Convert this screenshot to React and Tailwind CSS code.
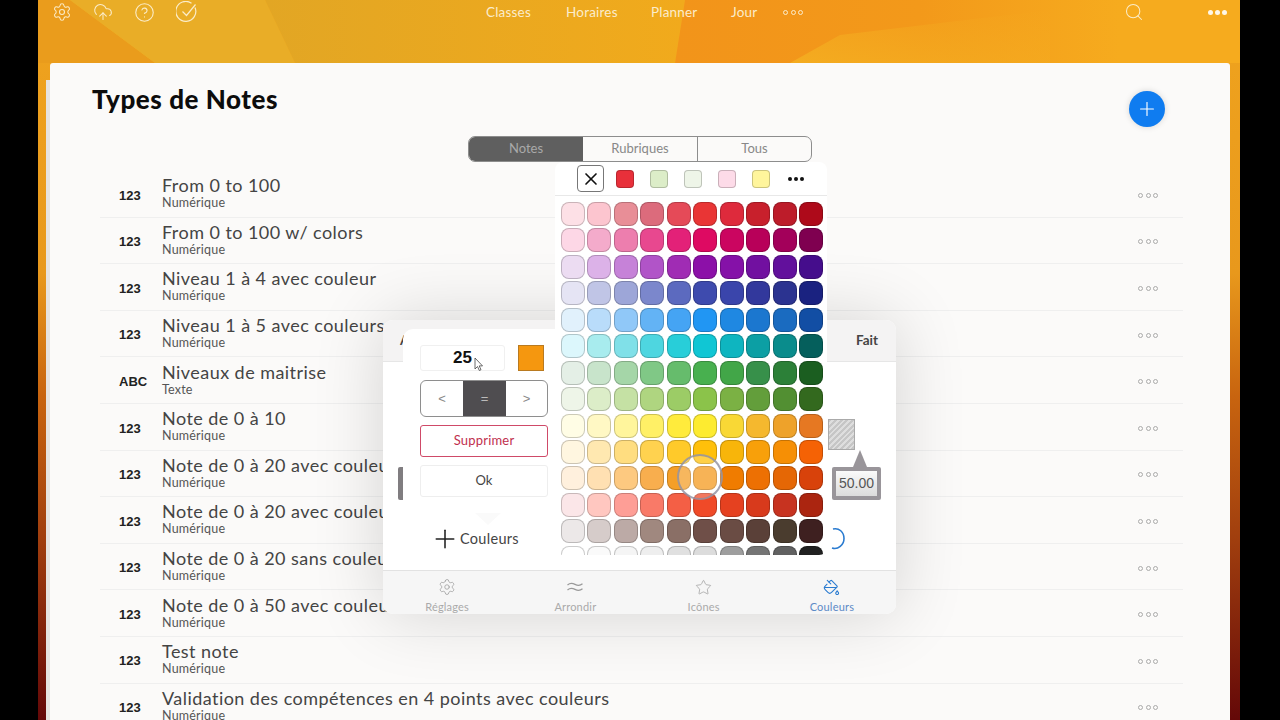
import { Settings, CloudUpload, CircleHelp, Plus, Star, PaintBucket, Search, X } from 'lucide-react'

const NOTE_TYPES = [
  { code: '123', name: 'From 0 to 100', kind: 'Numérique' },
  { code: '123', name: 'From 0 to 100 w/ colors', kind: 'Numérique' },
  { code: '123', name: 'Niveau 1 à 4 avec couleur', kind: 'Numérique' },
  { code: '123', name: 'Niveau 1 à 5 avec couleurs', kind: 'Numérique' },
  { code: 'ABC', name: 'Niveaux de maitrise', kind: 'Texte' },
  { code: '123', name: 'Note de 0 à 10', kind: 'Numérique' },
  { code: '123', name: 'Note de 0 à 20 avec couleurs', kind: 'Numérique' },
  { code: '123', name: 'Note de 0 à 20 avec couleurs', kind: 'Numérique' },
  { code: '123', name: 'Note de 0 à 20 sans couleurs', kind: 'Numérique' },
  { code: '123', name: 'Note de 0 à 50 avec couleurs', kind: 'Numérique' },
  { code: '123', name: 'Test note', kind: 'Numérique' },
  { code: '123', name: 'Validation des compétences en 4 points avec couleurs', kind: 'Numérique' },
]

const PALETTE = [
  ['#fde0e6', '#fcc5cf', '#e88e97', '#dc6b7c', '#e54a58', '#e93535', '#de2a3c', '#c8202c', '#bd1c2a', '#ae0a1a'],
  ['#fdd7e6', '#f4abcb', '#ed7eae', '#e8488f', '#e32178', '#de0a62', '#cb0560', '#b80059', '#a3005a', '#7f0050'],
  ['#ecdcf2', '#dcb2e8', '#c682d8', '#b154c8', '#a02cb4', '#8c10a8', '#8511a8', '#7110a0', '#62109c', '#450d8c'],
  ['#e5e4f4', '#c0c5e6', '#9da6d8', '#7b87cc', '#5c6abf', '#3e4bae', '#3a45ab', '#32389c', '#2b3390', '#1a2280'],
  ['#e1f1fc', '#b9dcfa', '#90c8f8', '#63b3f5', '#45a4f4', '#2196f3', '#1f88e2', '#1b77cf', '#1a6bc0', '#124ea4'],
  ['#dcf7fc', '#a8ecee', '#80e0e8', '#4ed6e0', '#28ced9', '#10c6d4', '#0eb5c0', '#0c9fa4', '#0a8c8c', '#055f5c'],
  ['#e4efe6', '#c8e4cb', '#a5d6a8', '#80c886', '#66bc6c', '#48b04f', '#42a648', '#37904a', '#2c8038', '#1b5e20'],
  ['#eef5e8', '#dcedc8', '#c5e1a4', '#afd580', '#9ccc66', '#8bc34a', '#7bb144', '#639e3b', '#528f32', '#33691e'],
  ['#fffde5', '#fff8c4', '#fff59c', '#fff066', '#ffeb3c', '#fdeb30', '#f9d835', '#f5b82e', '#eea22a', '#e67822'],
  ['#fff6e0', '#ffe8b0', '#ffdd80', '#ffd24f', '#ffca2a', '#ffc00a', '#f8b50a', '#f8a00a', '#f68f05', '#f56205'],
  ['#fff0dd', '#ffe0b2', '#fdc980', '#f8ae4e', '#f59f28', '#f59a1e', '#f07c00', '#ed7003', '#e56705', '#d8420b'],
  ['#fbe6e8', '#ffc7c0', '#fe9e96', '#f97a68', '#f45f45', '#f04a28', '#e54120', '#d83a1c', '#c73320', '#ab2510'],
  ['#ece8e8', '#d6ccca', '#bcaaa6', '#a0887f', '#8a6f66', '#6f4f48', '#6a4c44', '#5a4038', '#4a3c2e', '#3e2020'],
  ['#ffffff', '#fafafa', '#f5f5f5', '#eeeeee', '#e0e0e0', '#dcdcdc', '#9e9e9e', '#757575', '#616161', '#212121'],
]

const RECENT = ['#e8303a', '#dcedc8', '#eef5e8', '#fddbe8', '#fff59c']

const TABS = [
  { label: 'Réglages', icon: <Settings size={18} strokeWidth={1} /> },
  {
    label: 'Arrondir',
    icon: (
      <svg width="18" height="18" viewBox="0 0 18 18" fill="none" stroke="currentColor" strokeWidth="1.2">
        <path d="M1.5 7c2.5-2.2 4.5-2.2 7.5-.6s5 1.600 7.500-.6" />
        <path d="M1.5 12c2.5-2.2 4.500-2.200 7.500-.6s5 1.600 7.500-.6" />
      </svg>
    ),
  },
  { label: 'Icônes', icon: <Star size={17} strokeWidth={1} /> },
  { label: 'Couleurs', icon: <PaintBucket size={17} strokeWidth={1.5} />, active: true },
]

const Dots = ({ className }) => (
  <div className="flex gap-[2.5px]">
    <span className={`w-[5px] h-[5px] rounded-full border ${className}`} />
    <span className={`w-[5px] h-[5px] rounded-full border ${className}`} />
    <span className={`w-[5px] h-[5px] rounded-full border ${className}`} />
  </div>
)

const NoteRow = ({ note }) => (
  <div className="flex items-center h-[46.6px] border-b border-[#efefef] shrink-0">
    <div className="w-[62px] pl-[19px] pt-[3px] font-['Liberation_Sans'] font-bold text-[13px] text-[#222]">
      {note.code}
    </div>
    <div className="flex-1 min-w-0 pb-[4px]">
      <div className="text-[18px] leading-[22px] tracking-[0.45px] text-[#444] whitespace-nowrap">{note.name}</div>
      <div className="text-[12.5px] leading-[13px] tracking-[0.2px] text-[#555]">{note.kind}</div>
    </div>
    <div className="pr-[25px] pt-[3px]">
      <Dots className="border-[#aaa]" />
    </div>
  </div>
)

const Header = () => (
  <div className="relative h-[63px] shrink-0 flex items-start pt-[2px] text-white/90">
    <div className="flex items-center h-[20px] ml-[14px] gap-[21px] text-[#fbecc8]">
      <Settings size={20} strokeWidth={1.25} />
      <CloudUpload size={20} strokeWidth={1.25} />
      <CircleHelp size={21} strokeWidth={1.25} />
      <svg width="22" height="22" viewBox="0 0 22 22" fill="none" stroke="currentColor" strokeWidth="1.2">
        <path d="M19 6.500A10 10 0 1 1 15.500 2.200" />
        <path d="M6.500 10.500l4 4 9-11" />
      </svg>
    </div>
    <div className="flex items-center h-[20px] ml-[288px] text-[13.5px] tracking-[0.2px] text-[#fbeccb]">
      <span className="w-[80px]">Classes</span>
      <span className="w-[85px]">Horaires</span>
      <span className="w-[80px]">Planner</span>
      <span className="w-[52px]">Jour</span>
      <Dots className="border-[#fbeccb]" />
    </div>
    <div className="flex items-center h-[20px] ml-auto mr-[13px] gap-[64px] text-[#fbecc8]">
      <Search size={20} strokeWidth={1.25} />
      <div className="flex gap-[2px]">
        <span className="w-[5px] h-[5px] rounded-full bg-white/90" />
        <span className="w-[5px] h-[5px] rounded-full bg-white/90" />
        <span className="w-[5px] h-[5px] rounded-full bg-white/90" />
      </div>
    </div>
  </div>
)

const NotesCard = () => (
  <div className="relative flex-1 min-h-0 ml-[12px] mr-[10px]">
    <div className="absolute -left-[4px] top-[17px] bottom-0 w-[4px] bg-[#e6e3e0]" />
    <div className="h-full bg-[#fbfaf9] rounded-t-[3px] overflow-hidden flex flex-col pt-[20px]">
      <div className="flex items-center justify-between pl-[42px] pr-[65px] h-[52px] shrink-0">
        <h1 className="text-[26px] font-black tracking-[0.55px] text-[#0c0c0c] -mt-[19px]">Types de Notes</h1>
        <button className="w-[36px] h-[36px] rounded-full bg-[#0f7cf0] text-white flex items-center justify-center shadow-[0_0_6px_rgba(0,0,0,0.15)]">
          <Plus size={22} strokeWidth={1.25} />
        </button>
      </div>
      <div className="flex justify-center shrink-0 mt-[1px]">
        <div className="flex w-[344px] h-[26px] rounded-[7px] border border-[#8d8d8d] overflow-hidden text-[13px] text-[#888] bg-[#fbfaf9]">
          <div className="w-[114px] bg-[#5f5f5f] text-[#a9a9a9] flex items-center justify-center">Notes</div>
          <div className="w-[115px] border-r border-[#8d8d8d] flex items-center justify-center">Rubriques</div>
          <div className="flex-1 flex items-center justify-center">Tous</div>
        </div>
      </div>
      <div className="flex flex-col ml-[50px] mr-[47px] mt-[9px]">
        {NOTE_TYPES.map((note, i) => (
          <NoteRow key={i} note={note} />
        ))}
      </div>
    </div>
  </div>
)

const Dialog = () => (
  <div className="absolute left-[383px] top-[320px] w-[513px] h-[294px] rounded-[10px] bg-white overflow-hidden flex flex-col shadow-[0_0_70px_rgba(0,0,0,0.16)]">
    <div className="h-[42px] shrink-0 bg-[#f4f3f3] border-b border-[#e6e6e6] flex items-center justify-between pl-[17px] pr-[18px] text-[13.5px] font-bold text-[#444]">
      <span>Annuler</span>
      <span>Fait</span>
    </div>
    <div className="flex-1 min-h-0 flex flex-col">
      <div className="flex pt-[57px] pl-[15px] pr-[15px]">
        <div className="w-[6px] h-[33px] mt-[48px] rounded-l-[2px] bg-[#807d80]" />
        <div className="ml-auto w-[61px] flex flex-col">
          <div className="ml-[8px] w-[27px] h-[31px] border border-[#aaa] bg-[repeating-linear-gradient(135deg,#c6c6c6_0,#c6c6c6_2px,#dedede_2px,#dedede_4px)]" />
          <div className="flex flex-col items-end">
            <div className="mr-[14px] w-0 h-0 border-x-[7px] border-x-transparent border-b-[17px] border-b-[#99959a]" />
            <div className="w-[49px] h-[33px] rounded-[2px] bg-[#99959a] p-[4px]">
              <div className="w-full h-full bg-[linear-gradient(#fafafa,#dcdcdc)] flex items-center justify-center text-[14px] text-[#555] font-['Liberation_Sans']">
                50.00
              </div>
            </div>
          </div>
        </div>
      </div>
      <div className="flex items-center mt-[27px] pl-[47px] pr-[50px] h-[24px]">
        <Plus size={30} strokeWidth={1.25} className="text-[#222]" />
        <span className="text-[14.5px] tracking-[0.3px] text-[#444]">Couleurs</span>
        <svg className="ml-auto text-[#2a7bd0]" width="16" height="24" viewBox="0 0 16 24" fill="none" stroke="currentColor" strokeWidth="1.6">
          <path d="M3 2c6-1.500 11 3 11 9.500S8 23 2 21" />
        </svg>
      </div>
    </div>
    <div className="h-[44px] shrink-0 bg-[#f6f6f6] border-t border-[#e2e2e2] grid grid-cols-4">
      {TABS.map((tab) => (
        <div
          key={tab.label}
          className={`flex flex-col items-center justify-end pb-[1px] gap-[4px] text-[11px] tracking-[0.2px] ${
            tab.active ? 'text-[#5d8ac6]' : 'text-[#aaa]'
          }`}
        >
          <span className={tab.active ? 'text-[#2a7bd0]' : 'text-[#999]'}>{tab.icon}</span>
          <span className="leading-[13px]">{tab.label}</span>
        </div>
      ))}
    </div>
  </div>
)

const ValuePopover = () => (
  <div className="absolute left-[403px] top-[329px] w-[162px] h-[184px] rounded-[10px] bg-white pl-[17px] pt-[16px] flex flex-col">
    <div className="flex items-center gap-[13px]">
      <div className="relative w-[85px] h-[26px] rounded-[3px] border border-[#f0f0f0] flex items-center justify-center font-['Liberation_Sans'] font-bold text-[17px] text-[#111]">
        25
        <svg className="absolute left-[53px] top-[11px]" width="9" height="15" viewBox="0 0 9 15" fill="#fff" stroke="#444" strokeWidth="0.8">
          <path d="M1 1v11l2.500-2.500 1.800 4 1.700-.8-1.800-3.800H8.500z" />
        </svg>
      </div>
      <div className="w-[26px] h-[26px] bg-[#f5970f] border border-[#b97a20]" />
    </div>
    <div className="mt-[9px] w-[128px] h-[37px] rounded-[6px] border border-[#8e8e8e] overflow-hidden flex text-[13px] text-[#888] font-['Liberation_Sans']">
      <div className="w-[42px] flex items-center justify-center">&lt;</div>
      <div className="w-[43px] bg-[#4f4d50] text-[#bbb] flex items-center justify-center">=</div>
      <div className="flex-1 flex items-center justify-center">&gt;</div>
    </div>
    <div className="mt-[8px] w-[128px] h-[32px] rounded-[3px] border border-[#cf4a68] flex items-center justify-center text-[13px] tracking-[0.2px] text-[#bf2f4e]">
      Supprimer
    </div>
    <div className="mt-[8px] w-[128px] h-[32px] rounded-[3px] border border-[#eeeeee] flex items-center justify-center text-[13px] text-[#444]">
      Ok
    </div>
    <div className="absolute left-[72px] -bottom-[12px] w-0 h-0 border-x-[13px] border-x-transparent border-t-[12px] border-t-[#fafafa]" />
  </div>
)

const ColorPalette = () => (
  <div className="absolute left-[555px] top-[162px] w-[272px] h-[393px] rounded-[8px] bg-white overflow-hidden flex flex-col">
    <div className="h-[34px] shrink-0 flex items-center border-b border-[#e8e8e8] pl-[22px]">
      <div className="w-[27px] h-[27px] rounded-[4px] border border-[#777] flex items-center justify-center text-[#111]">
        <X size={20} strokeWidth={2} />
      </div>
      <div className="flex gap-[16px] ml-[12px]">
        {RECENT.map((color) => (
          <span
            key={color}
            className="w-[18px] h-[18px] rounded-[4px] border border-black/20"
            style={{ backgroundColor: color }}
          />
        ))}
      </div>
      <div className="flex gap-[2px] ml-[18px]">
        <span className="w-[4px] h-[4px] rounded-full bg-[#111]" />
        <span className="w-[4px] h-[4px] rounded-full bg-[#111]" />
        <span className="w-[4px] h-[4px] rounded-full bg-[#111]" />
      </div>
    </div>
    <div className="grid grid-cols-[repeat(10,24px)] gap-[2.45px] pl-[6px] pt-[6px]">
      {PALETTE.flat().map((color, i) => (
        <span
          key={i}
          className="w-[24px] h-[24px] rounded-[8px] border border-black/20"
          style={{ backgroundColor: color }}
        />
      ))}
    </div>
  </div>
)

export default function App() {
  return (
    <div className="relative w-[1280px] h-[720px] overflow-hidden bg-black font-['Lato',sans-serif]">
      <div className="relative ml-[38px] w-[1202px] h-full flex flex-col bg-[linear-gradient(180deg,#f0a41e_0%,#e8981c_38%,#c8640f_55%,#a03e0e_75%,#640808_100%)]">
        <svg className="absolute left-0 top-0" width="1202" height="63" viewBox="38 0 1202 63">
          <defs>
            <linearGradient id="band" x1="0" x2="1" y1="0" y2="0">
              <stop offset="0" stopColor="#f2941a" />
              <stop offset="0.55" stopColor="#f3991a" />
              <stop offset="1" stopColor="#f6ab1e" />
            </linearGradient>
            <linearGradient id="swoosh" x1="0" x2="1" y1="1" y2="0">
              <stop offset="0" stopColor="#f4ac20" />
              <stop offset="1" stopColor="#f4ac20" stopOpacity="0" />
            </linearGradient>
            <linearGradient id="gold" x1="0" x2="1" y1="0" y2="0">
              <stop offset="0" stopColor="#e2a624" />
              <stop offset="1" stopColor="#f1aa1c" />
            </linearGradient>
          </defs>
          <rect x="38" y="0" width="1202" height="63" fill="#f6ab1e" />
          <polygon points="38,0 70,0 155,63 38,63" fill="#ea9c1c" />
          <polygon points="70,0 265,0 295,63 155,63" fill="#e9ad27" />
          <polygon points="265,0 685,0 675,63 295,63" fill="url(#gold)" />
          <polygon points="685,0 1120,0 1120,63 675,63" fill="url(#band)" />
          <polygon points="790,63 840,35 1050,10 1050,63" fill="url(#swoosh)" />
        </svg>
        <Header />
        <NotesCard />
      </div>
      <Dialog />
      <ValuePopover />
      <ColorPalette />
      <div className="absolute left-[677px] top-[454px] w-[46px] h-[46px] rounded-full border-[2.5px] border-[#8d8d9f]/80 bg-white/25" />
    </div>
  )
}
